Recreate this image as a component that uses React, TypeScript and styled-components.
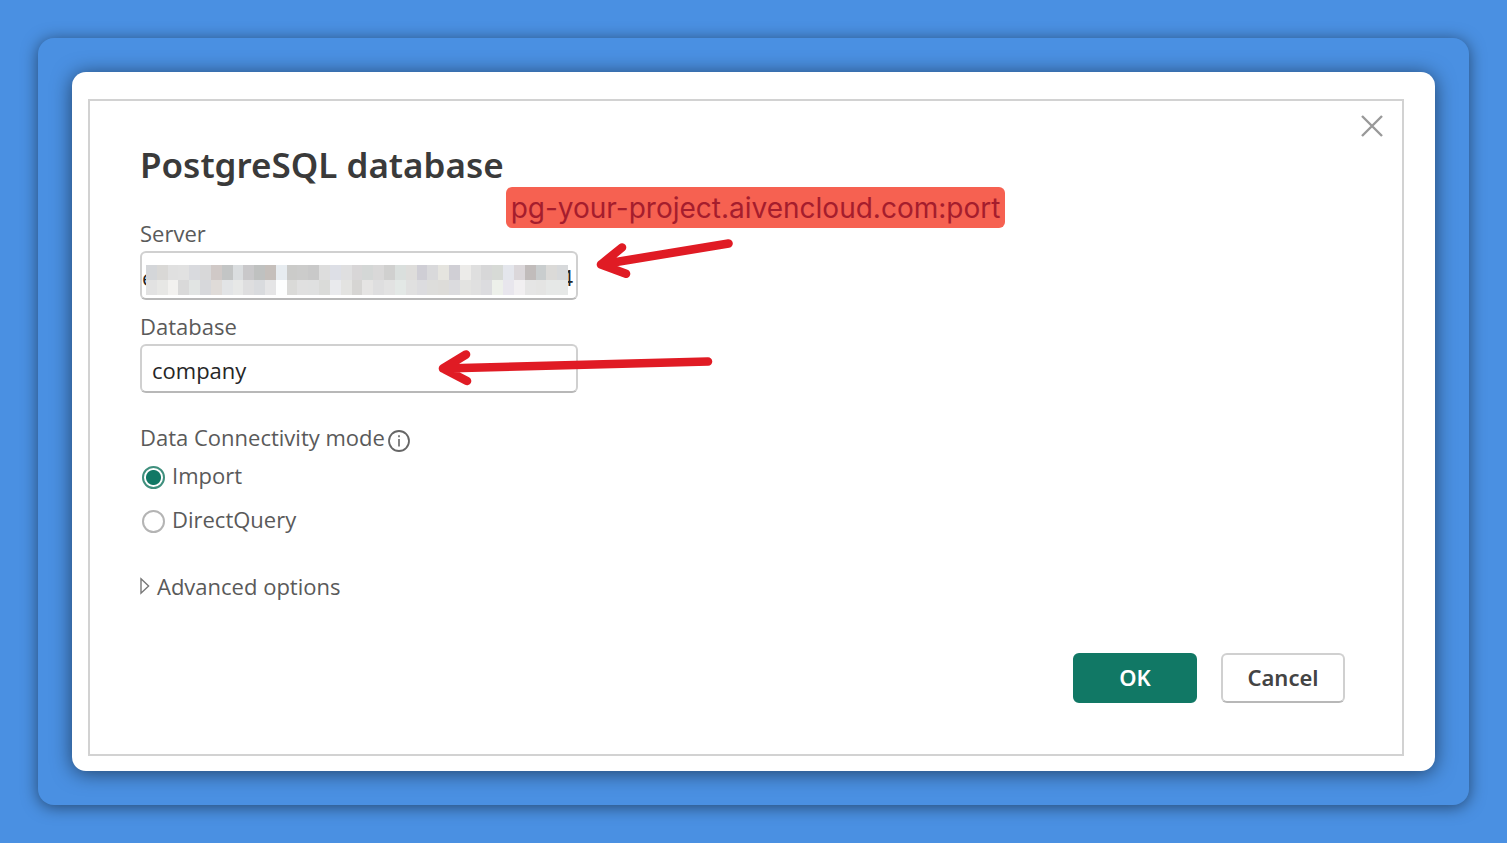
import React, { useState } from "react";
import styled, { createGlobalStyle } from "styled-components";

const GlobalStyle = createGlobalStyle`
  *, *::before, *::after { box-sizing: border-box; }
  body {
    margin: 0;
    background: #4a90e2;
    color: #5a5a5a;
    font-family: "Open Sans", "Noto Sans", sans-serif;
    font-size: 22px;
    line-height: 30px;
  }
  button, input { font: inherit; }
`;

const Backdrop = styled.div`
  display: flex;
  min-height: 100vh;
  padding: 38px;
`;

const Frame = styled.div`
  display: flex;
  flex: 1;
  padding: 34px;
  border-radius: 16px;
  background: #4a90e2;
  box-shadow: 0 2px 16px rgba(0, 0, 0, 0.5);
`;

const Sheet = styled.main`
  display: flex;
  flex: 1;
  padding: 27px 31px 15px 16px;
  border-radius: 14px;
  background: #fff;
  box-shadow: 0 2px 20px rgba(0, 0, 0, 0.55);
`;

const Dialog = styled.section`
  position: relative;
  display: flex;
  flex: 1;
  flex-direction: column;
  padding: 39px 57px 51px 50px;
  border: 2px solid #d2d2d2;
`;

const CloseButton = styled.button`
  position: absolute;
  top: 13px;
  right: 18px;
  display: flex;
  padding: 0;
  border: 0;
  background: none;
  color: #999;
`;

const Title = styled.h1`
  margin: 0 0 28px;
  color: #3a3a3a;
  font-family: "Noto Sans", "Open Sans", sans-serif;
  font-size: 35px;
  font-weight: 600;
  line-height: 50px;
`;

const Form = styled.form`
  position: relative;
  display: flex;
  flex: 1;
  flex-direction: column;
`;

const Field = styled.div`
  display: flex;
  flex-direction: column;
  gap: 3px;
  width: 438px;
  margin-bottom: 11px;
`;

const InputBox = styled.div`
  position: relative;
  display: flex;
  align-items: center;
  height: 49px;
  border: 2px solid #d0d0d0;
  border-bottom-color: #b8b8b8;
  border-radius: 6px;
  background: #fff;
  color: #262626;
`;

const TextInput = styled.input<{ $inset: number }>`
  flex: 1;
  min-width: 0;
  height: 100%;
  padding: 2px 0 0 ${(p) => p.$inset}px;
  border: 0;
  outline: 0;
  background: none;
  color: inherit;
`;

const Suffix = styled.span`
  padding: 2px 3px 0 0;
`;

const Mosaic = styled.svg`
  position: absolute;
  top: 12px;
  left: 4px;
  width: 422px;
  height: 30px;
`;

const ModeGroup = styled.fieldset`
  display: flex;
  flex-direction: column;
  gap: 14px;
  margin: 18px 0 37px;
  padding: 0;
  border: 0;
`;

const ModeLegend = styled.legend`
  display: flex;
  gap: 3px;
  margin-bottom: 8px;
  padding: 0;

  svg { margin-top: 8px; }
`;

const Option = styled.label`
  display: flex;
  gap: 7px;
  padding-left: 2px;
`;

const Radio = styled.input`
  appearance: none;
  width: 23px;
  height: 23px;
  margin: 6px 0 0;
  border: 2px solid #b4b4b4;
  border-radius: 50%;
  background: #fff;

  &:checked {
    border-color: #3f8f7d;
    background: radial-gradient(circle, #117865 7px, #fff 8px);
  }
`;

const Advanced = styled.button`
  display: flex;
  align-items: center;
  align-self: flex-start;
  gap: 7px;
  padding: 0;
  border: 0;
  background: none;
  color: inherit;
`;

const Actions = styled.footer`
  display: flex;
  justify-content: flex-end;
  gap: 24px;
  margin-top: auto;
`;

const ActionButton = styled.button<{ $primary?: boolean }>`
  width: 124px;
  height: 50px;
  padding: 0 0 2px;
  border: 2px solid ${(p) => (p.$primary ? "#117865" : "#d0d0d0")};
  border-bottom-color: ${(p) => (p.$primary ? "#117865" : "#b8b8b8")};
  border-radius: 6px;
  background: ${(p) => (p.$primary ? "#117865" : "#fff")};
  color: ${(p) => (p.$primary ? "#fff" : "#444")};
  font-family: "Noto Sans", "Open Sans", sans-serif;
  font-weight: 600;
`;

const Callout = styled.div`
  position: absolute;
  top: -31px;
  left: 366px;
  width: 499px;
  padding-top: 1px;
  border-radius: 6px;
  background: #f66151;
  color: #a51d2d;
  font-family: Inter, sans-serif;
  font-size: 28px;
  line-height: 40px;
  text-align: center;
  white-space: nowrap;
`;

const Arrows = styled.svg`
  position: absolute;
  top: 12px;
  left: 290px;
  pointer-events: none;
`;

const mosaicRows = [
  "d4d6d9 d9d8d6 e0e0e0 e1e1e1 d9dade d8d8d9 d0c9c7 c3c5c5 dadddf c9c8ca bfc1c0 c5bfbb e7ecf0 cbcbc9 cccccb c9c9c9 dddddd dddfe6 dfdfe0 d8d6d7 d4d7d6 d9d8d8 d0d0cf dadfdd dedddb cfced5 d9d9db e5e4df d0cfd5 ecebe9 dfdfdf d7d7d8 d7dad6 e4e6ec dbd7da c1bcbb c9cdce dbdad8 d7d9db",
  "e2e2e2 e7e7e5 f2f1ef d9d9d9 e1e4e3 d7d8db dfdbd8 e2e4e6 e7e8e7 dededf d9dbde e5e5e6 fdfefe dadad8 e0e0e0 dfe0e0 dadbd9 e9eaed e3e3e1 d6d5d3 e5e4e3 dededf e2e2e2 e3e8e6 e0e0e0 dcdcdf dddddb dddcd9 dbdbde e3e3e1 e0e0e0 dcdcdf edf0ea e8e6ed f1eff1 e5e5e5 e4e4e3 e6e8e7 e6e8e7",
].map((row) => row.split(" "));

function RedactionMosaic() {
  return (
    <Mosaic viewBox="0 0 39 2" preserveAspectRatio="none" shapeRendering="crispEdges" aria-hidden="true">
      {mosaicRows.map((row, y) =>
        row.map((color, x) => (
          <rect key={`${x}-${y}`} x={x} y={y} width="1" height="1" fill={`#${color}`} />
        ))
      )}
    </Mosaic>
  );
}

export default function App() {
  const [mode, setMode] = useState("import");
  return (
    <>
      <GlobalStyle />
      <Backdrop>
        <Frame>
          <Sheet>
            <Dialog role="dialog" aria-labelledby="dialog-title">
              <CloseButton type="button" aria-label="Close">
                <svg width="24" height="24" viewBox="0 0 24 24" fill="none" stroke="currentColor" strokeWidth="2.4">
                  <path d="M2 2 22 22M22 2 2 22" />
                </svg>
              </CloseButton>
              <Title id="dialog-title">PostgreSQL database</Title>
              <Form onSubmit={(e) => e.preventDefault()}>
                <Field>
                  <label htmlFor="server">Server</label>
                  <InputBox>
                    <TextInput id="server" $inset={0} defaultValue="e" />
                    <Suffix>4</Suffix>
                    <RedactionMosaic />
                  </InputBox>
                </Field>
                <Field>
                  <label htmlFor="database">Database</label>
                  <InputBox>
                    <TextInput id="database" $inset={10} defaultValue="company" />
                  </InputBox>
                </Field>
                <ModeGroup>
                  <ModeLegend>
                    Data Connectivity mode
                    <svg width="22" height="22" viewBox="0 0 22 22" fill="none" stroke="#666" aria-hidden="true">
                      <circle cx="11" cy="11" r="10" strokeWidth="1.8" />
                      <path d="M11 9v7.5M11 5.2v2" strokeWidth="1.6" />
                    </svg>
                  </ModeLegend>
                  <Option>
                    <Radio type="radio" name="mode" checked={mode === "import"} onChange={() => setMode("import")} />
                    Import
                  </Option>
                  <Option>
                    <Radio type="radio" name="mode" checked={mode === "direct"} onChange={() => setMode("direct")} />
                    DirectQuery
                  </Option>
                </ModeGroup>
                <Advanced type="button" aria-expanded="false">
                  <svg width="10" height="18" viewBox="0 0 10 18" fill="none" stroke="#777" strokeWidth="1.4" aria-hidden="true">
                    <path d="M1 1.8 8.6 9 1 16.2Z" />
                  </svg>
                  Advanced options
                </Advanced>
                <Actions>
                  <ActionButton type="submit" $primary>OK</ActionButton>
                  <ActionButton type="button">Cancel</ActionButton>
                </Actions>
                <Callout>pg-your-project.aivencloud.com:port</Callout>
                <Arrows
                  width="310"
                  height="160"
                  viewBox="430 230 310 160"
                  fill="none"
                  stroke="#e01b24"
                  strokeWidth="8.6"
                  strokeLinecap="round"
                  strokeLinejoin="round"
                  aria-hidden="true"
                >
                  <path d="M728.500 243.500 601 264.500M622 247.500 601 264.500 626 273.800" />
                  <path d="M708 361.500 443 368.500M466 354.500 443 368.500 467 381" />
                </Arrows>
              </Form>
            </Dialog>
          </Sheet>
        </Frame>
      </Backdrop>
    </>
  );
}
